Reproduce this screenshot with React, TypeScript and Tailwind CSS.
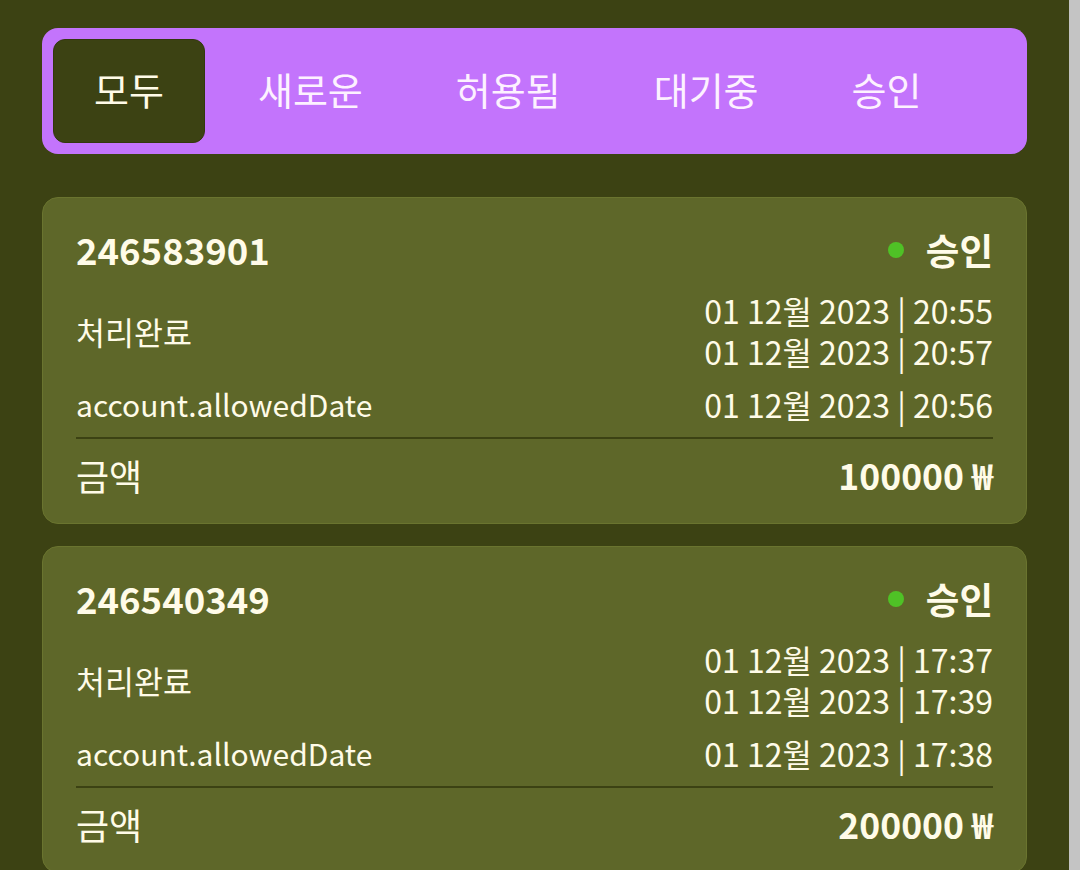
import React from "react";

const tabs = ["모두", "새로운", "허용됨", "대기중", "승인"];

type Tx = {
  id: string;
  d1: string;
  d2: string;
  d3: string;
  amount: string;
};

const items: Tx[] = [
  {
    id: "246583901",
    d1: "01 12월 2023 | 20:55",
    d2: "01 12월 2023 | 20:57",
    d3: "01 12월 2023 | 20:56",
    amount: "100000 ₩",
  },
  {
    id: "246540349",
    d1: "01 12월 2023 | 17:37",
    d2: "01 12월 2023 | 17:39",
    d3: "01 12월 2023 | 17:38",
    amount: "200000 ₩",
  },
];

function Card({ t }: { t: Tx }) {
  return (
    <div className="rounded-[16px] border border-[#6a742f] bg-[#5e6729] px-[33px] pt-[30px] pb-[26px] text-[#fffbe8]">
      <div className="flex items-center justify-between h-[44px]">
        <span className="text-[36.5px] font-bold leading-[44px]">{t.id}</span>
        <div className="flex items-center gap-[22px]">
          <span className="w-[16px] h-[16px] rounded-full bg-[#4fc126]" />
          <span className="text-[36.5px] font-bold leading-[44px]">승인</span>
        </div>
      </div>
      <div className="mt-[18px] flex items-center justify-between">
        <span className="text-[31.5px] leading-[41px]">처리완료</span>
        <div className="text-right whitespace-pre-line text-[32px] leading-[41px]">
          {`${t.d1}\n${t.d2}`}
        </div>
      </div>
      <div className="mt-[12px] flex items-center justify-between leading-[41px]">
        <span className="text-[30px]">account.allowedDate</span>
        <span className="text-[32px]">{t.d3}</span>
      </div>
      <div className="mt-[12px] h-[2px] bg-[#3c4213]" />
      <div className="mt-[14px] flex items-center justify-between h-[44px]">
        <span className="text-[36px] leading-[44px]">금액</span>
        <span className="text-[35.5px] font-bold leading-[44px]">{t.amount}</span>
      </div>
    </div>
  );
}

export default function App() {
  return (
    <div
      className="w-[1080px] h-[870px] overflow-hidden bg-[#3c4213] flex"
      style={{ fontFamily: '"Noto Sans CJK KR", "Noto Sans", sans-serif' }}
    >
      <div className="flex-1 px-[42px] pt-[28px] flex flex-col">
        <div className="rounded-[16px] bg-[#c374fc] p-[11px] flex gap-[13px]">
          {tabs.map((tab, i) => (
            <div
              key={tab}
              className={
                i === 0
                  ? "h-[104px] px-[40px] pb-[6px] flex items-center rounded-[12px] bg-[#3c4213] border border-[#33380f] text-[38px] text-[#fffbe8]"
                  : "h-[104px] px-[40px] pb-[6px] flex items-center rounded-[12px] text-[38px] text-[#fdf1ff]"
              }
            >
              {tab}
            </div>
          ))}
        </div>
        <div className="mt-[43px] flex flex-col gap-[22px]">
          {items.map((t) => (
            <Card key={t.id} t={t} />
          ))}
        </div>
      </div>
      <div className="w-[11px] bg-[#c4c4c4]" />
    </div>
  );
}
